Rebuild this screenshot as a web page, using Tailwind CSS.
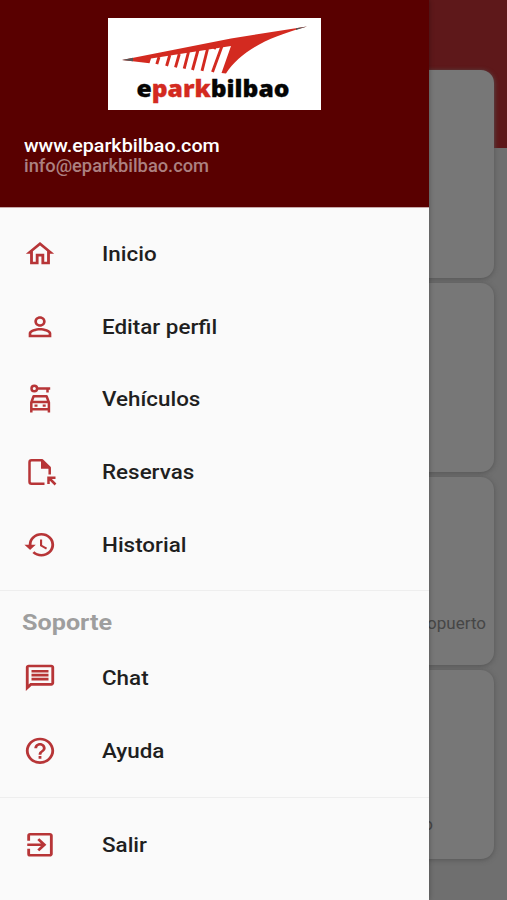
<!DOCTYPE html>
<html lang="es">
<head>
<meta charset="utf-8">
<title>eparkbilbao</title>
<script src="https://cdn.jsdelivr.net/npm/@tailwindcss/browser@4"></script>
</head>
<body class="relative h-[900px] w-[507px] overflow-hidden bg-[#6f6f6f] font-[Roboto,sans-serif]">
<!-- Dimmed page behind the drawer -->
<main class="h-full w-full bg-linear-to-b from-[#5e181a] from-[148.5px] to-[#6f6f6f] to-[148.5px] pt-[70px] pr-[13px]">
  <div class="flex flex-col gap-[5px] text-[17px] text-[#464646]">
    <section class="h-[208px] rounded-[13px] bg-[#777] shadow-[0_1px_5px_#555]"></section>
    <section class="h-[189px] rounded-[13px] bg-[#777] shadow-[0_1px_5px_#555]"></section>
    <section class="flex h-[188px] items-end justify-end rounded-[13px] bg-[#777] pr-[8px] pb-[30px] shadow-[0_1px_5px_#555]"><span class="leading-[24px]">Aeropuerto</span></section>
    <section class="flex h-[189px] items-end justify-end rounded-[13px] bg-[#777] pr-[61px] pb-[23px] shadow-[0_1px_5px_#555]"><span class="leading-[24px]">Centro</span></section>
  </div>
</main>
<!-- Navigation drawer -->
<aside class="absolute top-0 left-0 h-[900px] w-[429px] bg-[#fafafa] shadow-[0_0_5px_#0005]">
  <header class="flex h-[207.500px] flex-col border-b border-[#c9a9a9] bg-[#590000] pt-[18px]">
    <svg class="ml-[108px] h-[92px] w-[213px] shrink-0" viewBox="108 18 213 92">
      <path fill="#fff" d="M108 18h213v92H108z"/>
      <path fill="#d32a20" d="M122 60 L231 38.500 L307 26.500 C265 38 240 52 226 73.500 L221.500 73 L231 46 L151 58.500 L149.500 63.300 Z"/>
      <path fill="none" stroke="#d32a20" stroke-width="2.900" d="M159 57l-2.200 7.200M169.800 55l-3.200 11M179.300 54l-3.800 13.300M188.500 52l-4.300 16.700M198 50l-5.500 20M207.500 49l-5.500 21.800M222 46l-9.500 26M215 47l-1 2"/>
      <path fill="#555" d="M122 60l11-2.200v3.500zM307 26.500l-11 1.700v1.800z"/>
      <text x="136.500" y="96.500" textLength="153" lengthAdjust="spacingAndGlyphs" font-family="Open Sans" font-weight="800" font-size="23" fill="#050505" stroke="#050505" stroke-width="0.300">e<tspan fill="#d32a20" stroke="#d32a20">park</tspan>bilbao</text>
    </svg>
    <div class="mt-[26px] ml-[23.500px] flex flex-col text-[18.500px] leading-[20px] font-medium">
      <span class="origin-left scale-x-[1.065] text-white">www.eparkbilbao.com</span>
      <span class="origin-left scale-x-[1.045] text-[17.500px] text-[#ac8080]">info@eparkbilbao.com</span>
    </div>
  </header>
  <nav class="flex flex-col pt-[10px] text-[20px] font-medium text-[#1f1f1f]">
    <a class="flex h-[72.750px] items-center gap-[45px] pl-[23px]">
      <svg class="h-[31.500px] w-[34px] fill-[#b73537]" viewBox="0 0 24 24" preserveAspectRatio="none"><path d="M12 5.690l5 4.500V18h-2v-6H9v6H7v-7.810l5-4.500M12 3L2 12h3v8h6v-6h2v6h6v-8h3L12 3z"/></svg>
      <span class="origin-left scale-x-112">Inicio</span></a>
    <a class="flex h-[72.750px] items-center gap-[45px] pl-[23px]">
      <svg class="h-[31.500px] w-[34px] fill-[#b73537]" viewBox="0 0 24 24" preserveAspectRatio="none"><path d="M12 5.900a2.100 2.100 0 1 1 0 4.200 2.100 2.100 0 0 1 0-4.200m0 9c2.970 0 6.100 1.460 6.100 2.100v1.100H5.900V17c0-.64 3.130-2.100 6.100-2.100M12 4C9.790 4 8 5.790 8 8s1.790 4 4 4 4-1.790 4-4-1.790-4-4-4zm0 9c-2.670 0-8 1.340-8 4v3h16v-3c0-2.660-5.330-4-8-4z"/></svg>
      <span class="origin-left scale-x-112">Editar perfil</span></a>
    <a class="flex h-[72.750px] items-center gap-[45px] pl-[23px]">
      <svg class="h-[32px] w-[34px]" viewBox="0 0 34 32" fill="none" stroke="#b73537" stroke-width="2.500"><circle cx="11.300" cy="5.500" r="2.800"/><path d="M14 5.500h13.200M24.500 5.500v4"/><path d="M8.300 29.500V19.500l2.300-6.200h13l2.300 6.200v10M8.300 19h17.600M8.300 26.300h17.600" stroke-linejoin="round"/><path d="M11.500 22.700h3M19.700 22.700h3" stroke-width="2.300"/></svg>
      <span class="origin-left scale-x-112">Vehículos</span></a>
    <a class="flex h-[72.750px] items-center gap-[45px] pl-[23px]">
      <svg class="h-[32px] w-[34px]" viewBox="0 0 34 32" fill="none" stroke="#b73537" stroke-width="2.500"><path d="M21.500 27.700H8.500a2 2 0 0 1-2-2V6.200a2 2 0 0 1 2-2H19l7.700 7.500v6.800" stroke-linejoin="round"/><path d="M18 4v8.800h8.700z" fill="#b73537" stroke="none"/><path d="M25.500 28v-6.200h7M26 22l6.500 6.500"/></svg>
      <span class="origin-left scale-x-112">Reservas</span></a>
    <a class="flex h-[72.750px] items-center gap-[45px] pl-[23px]">
      <svg class="h-[31.500px] w-[34px] fill-[#b73537]" viewBox="0 0 24 24" preserveAspectRatio="none"><path d="M13 3a9 9 0 0 0-9 9H1l3.890 3.890.07.14L9 12H6c0-3.870 3.130-7 7-7s7 3.130 7 7-3.130 7-7 7c-1.930 0-3.680-.79-4.940-2.060l-1.420 1.420A8.950 8.950 0 0 0 13 21a9 9 0 0 0 0-18zm-1 5v5l4.280 2.540.72-1.210-3.500-2.080V8H12z"/></svg>
      <span class="origin-left scale-x-112">Historial</span></a>
    <hr class="mt-[9px] border-[#eee]">
    <h2 class="mt-[17px] ml-[22px] h-[33.500px] origin-left scale-x-[1.145] text-[22px] leading-[30px] font-bold text-[#9e9e9e]">Soporte</h2>
    <a class="flex h-[72.750px] items-center gap-[45px] pl-[23px]">
      <svg class="h-[31.500px] w-[34px] fill-[#b73537]" viewBox="0 0 24 24" preserveAspectRatio="none"><path d="M4 4h16v12H5.170L4 17.170V4m0-2c-1.100 0-1.990.9-1.990 2L2 22l4-4h14c1.100 0 2-.9 2-2V4c0-1.100-.9-2-2-2H4zm2 10h12v2H6zm0-3h12v2H6zm0-3h12v2H6z"/></svg>
      <span class="origin-left scale-x-112">Chat</span></a>
    <a class="flex h-[72.750px] items-center gap-[45px] pl-[23px]">
      <svg class="h-[31.500px] w-[34px] fill-[#b73537]" viewBox="0 0 24 24" preserveAspectRatio="none"><path d="M11 18h2v-2h-2v2zm1-16C6.480 2 2 6.480 2 12s4.480 10 10 10 10-4.480 10-10S17.520 2 12 2zm0 18c-4.410 0-8-3.590-8-8s3.590-8 8-8 8 3.590 8 8-3.590 8-8 8zm0-14c-2.210 0-4 1.790-4 4h2c0-1.100.9-2 2-2s2 .9 2 2c0 2-3 1.750-3 5h2c0-2.250 3-2.500 3-5 0-2.210-1.790-4-4-4z"/></svg>
      <span class="origin-left scale-x-112">Ayuda</span></a>
    <hr class="mt-[10px] mb-[10px] border-[#eee]">
    <a class="flex h-[72.750px] items-center gap-[45px] pl-[23px]">
      <svg class="h-[31.500px] w-[34px] fill-[#b73537]" viewBox="0 0 24 24" preserveAspectRatio="none"><path d="M10.090 15.590L11.500 17l5-5-5-5-1.410 1.410L12.670 11H3v2h9.670l-2.580 2.590zM19 3H5a2 2 0 0 0-2 2v4h2V5h14v14H5v-4H3v4a2 2 0 0 0 2 2h14c1.100 0 2-.9 2-2V5c0-1.100-.9-2-2-2z"/></svg>
      <span class="origin-left scale-x-112">Salir</span></a>
  </nav>
</aside>
</body>
</html>
